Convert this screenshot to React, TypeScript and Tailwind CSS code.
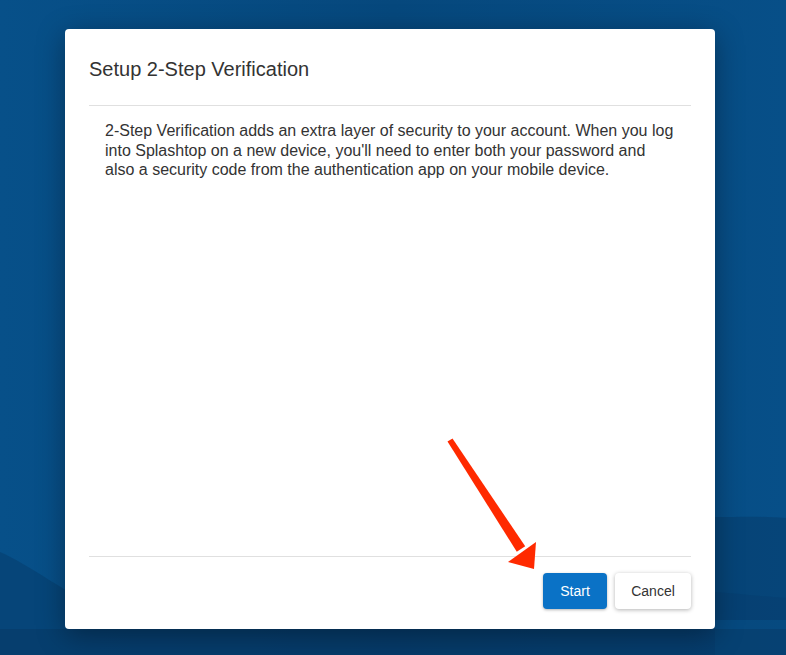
import React from 'react';

const Backdrop = () => (
    <svg className="absolute inset-0 h-full w-full" viewBox="0 0 786 655" preserveAspectRatio="none">
        <defs>
            <linearGradient id="bgTop" x1="0" y1="0" x2="1" y2="0">
                <stop offset="0" stopColor="#075089" />
                <stop offset="0.5" stopColor="#06487d" />
                <stop offset="1" stopColor="#074f88" />
            </linearGradient>
        </defs>
        <rect width="786" height="655" fill="url(#bgTop)" />
        <path d="M0 552 C 30 565, 60 590, 120 620 L 786 620 L 786 518 C 760 516, 740 517, 715 517 L 715 655 L 0 655 Z" fill="#052f55" opacity="0.3" />
        <path d="M715 592 C 740 594, 760 596, 786 598 L 786 655 L 715 655 Z" fill="#052f55" opacity="0.15" />
        <rect x="0" y="629" width="786" height="26" fill="#052f55" opacity="0.3" />
    </svg>
);

const Arrow = () => (
    <svg className="pointer-events-none absolute inset-0 h-full w-full" viewBox="0 0 786 655">
        <polygon points="447.5,441.6 452.5,438.4 525.2,546.3 516.8,551.7" fill="#ff2a00" />
        <polygon points="508,562 536,542 534,569" fill="#ff2a00" />
    </svg>
);

export default function App() {
    return (
        <div className="relative h-[655px] w-full overflow-hidden bg-[#074a80] font-['Liberation_Sans',Arial,sans-serif]">
            <Backdrop />
            <div className="relative ml-[65px] pt-[29px]">
                <div className="flex h-[600px] w-[650px] flex-col rounded-[4px] bg-white px-6 shadow-[0_6px_28px_rgba(0,0,0,0.35)]">
                    <div className="border-b border-[#e0e0e0] pb-5 pt-6">
                        <h2 className="text-[20px] leading-8 text-[#333]">Setup 2-Step Verification</h2>
                    </div>
                    <div className="flex-1 pl-4 pr-3 pt-[15px] text-[16px] leading-[19.5px] text-[#333]">
                        2-Step Verification adds an extra layer of security to your account. When you log into Splashtop on a new
                        device, you'll need to enter both your password and also a security code from the authentication app on
                        your mobile device.
                    </div>
                    <div className="flex justify-end gap-2 border-t border-[#e0e0e0] pb-5 pt-4">
                        <button className="h-9 w-16 rounded-[4px] bg-[#0a72c6] text-[14px] text-white shadow-[0_1px_3px_rgba(0,0,0,0.3)]">
                            Start
                        </button>
                        <button className="h-9 w-[76px] rounded-[4px] bg-white text-[14px] text-[#333] shadow-[0_1px_4px_rgba(0,0,0,0.3)]">
                            Cancel
                        </button>
                    </div>
                </div>
            </div>
            <Arrow />
        </div>
    );
}
